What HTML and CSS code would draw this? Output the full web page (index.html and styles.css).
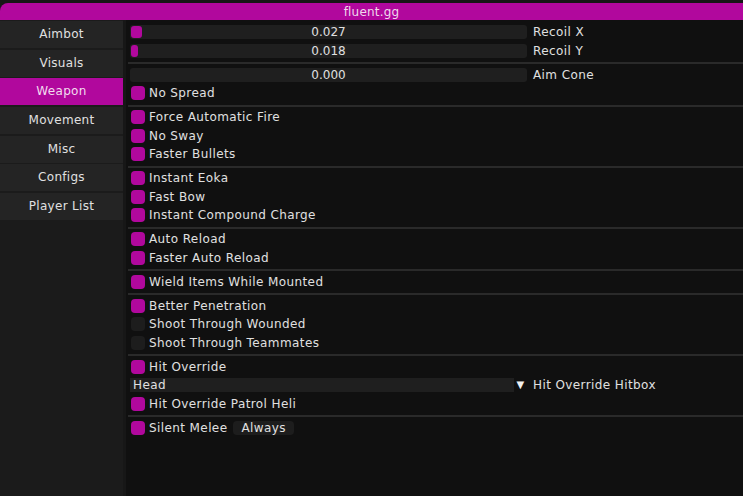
FILE: index.html
```html
<!DOCTYPE html>
<html lang="en">

<head>
  <meta charset="UTF-8" />
  <title>fluent.gg</title>
  <link rel="stylesheet" href="styles.css">
</head>

<body>
  <div class="window">
    <div class="titlebar">fluent.gg</div>
    <div class="main">
      <nav class="sidebar">
        <div class="tab">Aimbot</div>
        <div class="tab">Visuals</div>
        <div class="tab active">Weapon</div>
        <div class="tab">Movement</div>
        <div class="tab">Misc</div>
        <div class="tab">Configs</div>
        <div class="tab">Player List</div>
      </nav>

      <div class="content">
        <div class="row">
          <div class="slider"><span class="grab" style="width: 11px"></span>0.027</div>
          <span class="label">Recoil X</span>
        </div>
        <div class="row">
          <div class="slider"><span class="grab" style="width: 7px"></span>0.018</div>
          <span class="label">Recoil Y</span>
        </div>
        <div class="sep"></div>
        <div class="row">
          <div class="slider">0.000</div>
          <span class="label">Aim Cone</span>
        </div>
        <div class="row"><span class="check on"></span>No Spread</div>
        <div class="sep"></div>
        <div class="row"><span class="check on"></span>Force Automatic Fire</div>
        <div class="row"><span class="check on"></span>No Sway</div>
        <div class="row"><span class="check on"></span>Faster Bullets</div>
        <div class="sep"></div>
        <div class="row"><span class="check on"></span>Instant Eoka</div>
        <div class="row"><span class="check on"></span>Fast Bow</div>
        <div class="row"><span class="check on"></span>Instant Compound Charge</div>
        <div class="sep"></div>
        <div class="row"><span class="check on"></span>Auto Reload</div>
        <div class="row"><span class="check on"></span>Faster Auto Reload</div>
        <div class="sep"></div>
        <div class="row"><span class="check on"></span>Wield Items While Mounted</div>
        <div class="sep"></div>
        <div class="row"><span class="check on"></span>Better Penetration</div>
        <div class="row"><span class="check"></span>Shoot Through Wounded</div>
        <div class="row"><span class="check"></span>Shoot Through Teammates</div>
        <div class="sep"></div>
        <div class="row"><span class="check on"></span>Hit Override</div>
        <div class="row">
          <div class="combo"><span class="combo-value">Head</span><span class="arrow">&#9660;</span></div>
          <span class="label">Hit Override Hitbox</span>
        </div>
        <div class="row"><span class="check on"></span>Hit Override Patrol Heli</div>
        <div class="sep"></div>
        <div class="row"><span class="check on"></span>Silent Melee <span class="pill">Always</span></div>
      </div>
    </div>
  </div>
</body>

</html>
```

FILE: styles.css
```css
body {
  margin: 0;
  background: #161616;
  font-family: 'DejaVu Sans', sans-serif;
  font-size: 12px;
  color: #e0e0e0;
}

.window {
  height: 496px;
  padding-top: 3px;
  box-sizing: border-box;
  display: flex;
  flex-direction: column;
  overflow: hidden;
}

.titlebar {
  height: 17px;
  line-height: 18px;
  background: #b1089d;
  border-top-left-radius: 8px;
  text-align: center;
  color: #f0d8ec;
  letter-spacing: 0.2px;
}

.main {
  flex: 1;
  display: flex;
}

.sidebar {
  width: 123px;
  padding-top: 1px;
  background: #1b1b1b;
  border-right: 3px solid #171717;
  display: flex;
  flex-direction: column;
  gap: 1.7px;
}

.tab {
  height: 27px;
  line-height: 27px;
  background: #242424;
  text-align: center;
  letter-spacing: 0.3px;
}

.tab.active {
  background: #b1089d;
  color: #f2dcee;
}

.content {
  flex: 1;
  background: #101010;
  padding: 5px 0 0 2px;
}

.row {
  height: 14.5px;
  margin-bottom: 4px;
  padding-left: 2px;
  display: flex;
  align-items: center;
  white-space: nowrap;
  letter-spacing: 0.4px;
}

.sep {
  height: 2px;
  background: #2a2a2a;
  margin-bottom: 3.5px;
}

.slider {
  position: relative;
  width: 397px;
  height: 14px;
  line-height: 14px;
  background: #1f1f1f;
  border-radius: 3px;
  text-align: center;
  letter-spacing: 0;
}

.grab {
  position: absolute;
  left: 1px;
  top: 1px;
  height: 12px;
  background: #b1089d;
  border-radius: 3px;
}

.label {
  margin-left: 6px;
}

.check {
  width: 14px;
  height: 14px;
  margin: 0 4px 0 1px;
  background: #1d1d1d;
  border-radius: 4px;
}

.check.on {
  background: #b1089d;
}

.combo {
  width: 397px;
  height: 14px;
  line-height: 14px;
  background: #1f1f1f;
  display: flex;
  justify-content: space-between;
}

.combo-value {
  padding-left: 3px;
}

.arrow {
  width: 13px;
  background: #101010;
  text-align: center;
  font-size: 10px;
  color: #f0f0f0;
}

.pill {
  margin-left: 6px;
  padding: 0 8px;
  height: 14px;
  line-height: 14px;
  background: #1d1d1d;
  border-radius: 4px;
}
```
